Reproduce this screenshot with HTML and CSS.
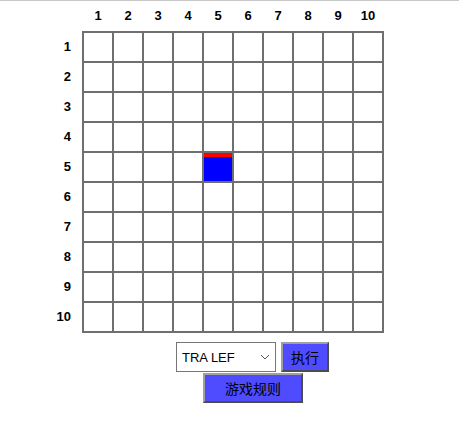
FILE: index.html
```html
<!DOCTYPE html>
<html>
<head>
<meta charset="utf-8">
<link rel="stylesheet" href="styles.css">
</head>
<body>
<div class="page">
  <div class="board">
    <div class="corner"></div>
    <div class="cols">
      <span>1</span><span>2</span><span>3</span><span>4</span><span>5</span><span>6</span><span>7</span><span>8</span><span>9</span><span>10</span>
    </div>
    <div class="rows">
      <span>1</span><span>2</span><span>3</span><span>4</span><span>5</span><span>6</span><span>7</span><span>8</span><span>9</span><span>10</span>
    </div>
    <div class="cells" id="cells"></div>
  </div>
  <div class="controls">
    <div class="row1">
      <div class="select-wrap">
        <select class="cmd">
          <option>TRA LEF</option>
          <option>TRA RIG</option>
          <option>TRA TOP</option>
          <option>TRA BOT</option>
          <option>TUN LEF</option>
          <option>TUN RIG</option>
          <option>TUN BAC</option>
          <option>GO</option>
        </select>
        <svg class="chev" width="10" height="6" viewBox="0 0 10 6"><path d="M1 1 L5 5 L9 1" fill="none" stroke="#555" stroke-width="1"/></svg>
      </div>
      <button class="btn btn-run">执行</button>
    </div>
    <div class="row2">
      <button class="btn btn-rules">游戏规则</button>
    </div>
  </div>
</div>
<script>
  var c = document.getElementById('cells');
  for (var r = 1; r <= 10; r++) {
    for (var k = 1; k <= 10; k++) {
      var d = document.createElement('div');
      d.className = 'cell' + (r === 5 && k === 5 ? ' player' : '');
      c.appendChild(d);
    }
  }
</script>
</body>
</html>
```

FILE: styles.css
```css
html, body {
  margin: 0;
  padding: 0;
  background: #fff;
}
body {
  font-family: "Liberation Sans", Arial, sans-serif;
  border-top: 1px solid #c9c9c9;
}
.page {
  width: 459px;
}
.board {
  display: grid;
  grid-template-columns: 82px 302px;
  grid-template-rows: 30px 302px;
}
.cols {
  display: grid;
  grid-template-columns: repeat(10, 30px);
  padding-left: 1px;
  align-items: center;
}
.cols span, .rows span {
  font-weight: bold;
  font-size: 13px;
  color: #000;
}
.cols span {
  text-align: center;
  line-height: 28px;
}
.rows {
  display: grid;
  grid-template-rows: repeat(10, 30px);
  padding-top: 1px;
  padding-right: 11px;
  text-align: right;
}
.rows span {
  line-height: 30px;
}
.cells {
  display: grid;
  grid-template-columns: repeat(10, 28px);
  grid-template-rows: repeat(10, 28px);
  gap: 2px;
  padding: 2px;
  background: #6f6f6f;
  width: 298px;
  height: 298px;
}
.cell {
  background: #fff;
}
.cell.player {
  background: #0000ff;
  border-top: 4px solid #ff0000;
}
.controls {
  margin-top: 9px;
  margin-left: 176px;
  display: flex;
  flex-direction: column;
  gap: 1px;
}
.row1 {
  display: flex;
  gap: 5px;
}
.select-wrap {
  position: relative;
  width: 100px;
  height: 30px;
}
.cmd {
  appearance: none;
  -webkit-appearance: none;
  width: 100px;
  height: 30px;
  box-sizing: border-box;
  border: 1px solid #767676;
  border-radius: 0;
  background: #fff;
  padding: 0 0 0 5px;
  font-family: "Liberation Sans", Arial, sans-serif;
  font-size: 13px;
  color: #000;
  outline: none;
}
.chev {
  position: absolute;
  right: 6px;
  top: 12px;
  pointer-events: none;
}
.btn {
  box-sizing: border-box;
  height: 30px;
  background: #4f4cff;
  border: 2px outset #a0a0a0;
  border-radius: 0;
  font-family: "Noto Sans CJK SC", sans-serif;
  font-size: 14px;
  color: #000;
  padding: 0;
  cursor: pointer;
}
.btn-run {
  width: 48px;
}
.row2 {
  padding-left: 27px;
}
.btn-rules {
  width: 100px;
}
```
